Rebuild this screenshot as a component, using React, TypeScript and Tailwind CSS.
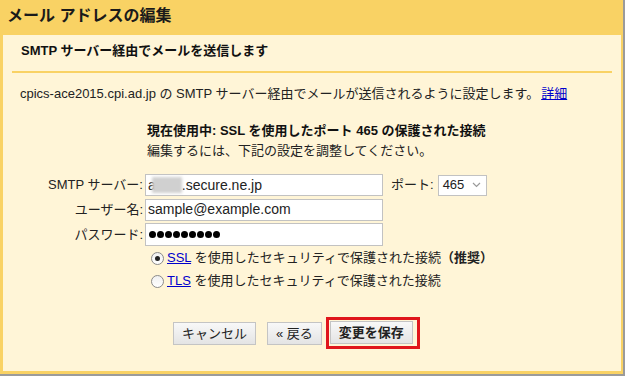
import React from "react"

const font = { fontFamily: '"Liberation Sans", Arial, "Noto Sans CJK JP", sans-serif' }

function Radio({ checked }: { checked?: boolean }) {
  return (
    <span className="w-[13px] h-[13px] rounded-full border border-[#8a8a8a] bg-gradient-to-b from-[#f0f0f0] to-white flex items-center justify-center shrink-0">
      {checked && <span className="w-[5px] h-[5px] rounded-full bg-[#222]" />}
    </span>
  )
}

function Btn({ children, bold }: { children: React.ReactNode; bold?: boolean }) {
  return (
    <button
      className={`h-[23px] px-[8px] border border-[#c4c4c4] bg-gradient-to-b from-[#f8f8f8] to-[#e4e4e4] text-[13px] text-[#222] leading-none ${bold ? "font-bold" : ""}`}
      style={font}
    >
      {children}
    </button>
  )
}

export default function App() {
  return (
    <div className="w-[625px] h-[376px] bg-[#9b9b9b] overflow-hidden" style={font}>
      <div className="w-[623px] h-[374px] bg-[#f9d264] flex flex-col">
        {/* header */}
        <div className="h-[35px] shrink-0 flex items-center pl-[7px] pb-[3px]">
          <h1 className="text-[16px] font-bold text-[#1a1a1a] leading-none">メール アドレスの編集</h1>
        </div>

        {/* panel */}
        <div className="ml-[3px] mr-[2px] h-[336px] bg-[#fff5d7] flex flex-col text-[13px] text-[#222]">
          <div className="mt-[8px] pl-[18px] h-[16px] leading-[16px] font-bold text-[#111]">
            SMTP サーバー経由でメールを送信します
          </div>
          <div className="mt-[12px] ml-[9px] w-[600px] h-[2px] bg-[#f9d264]" />

          <div className="mt-[13px] pl-[17px] h-[16px] leading-[16px]">
            cpics-ace2015.cpi.ad.jp の SMTP サーバー経由でメールが送信されるように設定します。
            <a href="#" className="text-[#0000cc] underline ml-[2px]">詳細</a>
          </div>

          <div className="mt-[21px] pl-[144px] h-[16px] leading-[16px] font-bold text-[#111]">
            現在使用中: SSL を使用したポート 465 の保護された接続
          </div>
          <div className="mt-[4px] pl-[144px] h-[16px] leading-[16px]">
            編集するには、下記の設定を調整してください。
          </div>

          {/* form */}
          <div className="mt-[15px] grid grid-cols-[140px_auto] gap-x-[2px] gap-y-[2.5px] items-center">
            <label className="text-right leading-[16px]">SMTP サーバー:</label>
            <div className="flex items-center">
              <div className="w-[238px] h-[22px] border border-[#c2c2c2] bg-white flex items-center pl-[2px] text-[14px]">
                <span>a</span>
                <span className="relative -ml-[4px] w-[30px] h-[16px] bg-[#d0d0d0] blur-[1.5px] inline-block" />
                <span>.secure.ne.jp</span>
              </div>
              <span className="ml-[8px] leading-[16px]">ポート:</span>
              <div className="ml-[4px] w-[49px] h-[21px] border border-[#c2c2c2] bg-white flex items-center justify-between pl-[4px] pr-[5px] text-[13px]">
                <span>465</span>
                <svg width="9" height="6" viewBox="0 0 9 6">
                  <path d="M1 1l3.5 3.5L8 1" fill="none" stroke="#9a9a9a" strokeWidth="1.2" />
                </svg>
              </div>
            </div>

            <label className="text-right leading-[16px]">ユーザー名:</label>
            <div className="w-[238px] h-[22px] border border-[#c2c2c2] bg-white flex items-center pl-[2px] text-[14px]">
              sample@example.com
            </div>

            <label className="text-right leading-[16px]">パスワード:</label>
            <div className="w-[238px] h-[23px] border border-[#c2c2c2] bg-white flex items-center pl-[3px] gap-[1px]">
              {Array.from({ length: 9 }).map((_, i) => (
                <span key={i} className="w-[7px] h-[7px] rounded-full bg-black" />
              ))}
            </div>
          </div>

          {/* radios */}
          <div className="mt-[4px] pl-[148px] flex flex-col gap-[7px]">
            <div className="flex items-center gap-[3px] h-[16px] leading-[16px]">
              <Radio checked />
              <span>
                <a href="#" className="text-[#0000cc] underline">SSL</a> を使用したセキュリティで保護された接続<b className="font-bold">（推奨）</b>
              </span>
            </div>
            <div className="flex items-center gap-[3px] h-[16px] leading-[16px]">
              <Radio />
              <span>
                <a href="#" className="text-[#0000cc] underline">TLS</a> を使用したセキュリティで保護された接続
              </span>
            </div>
          </div>

          {/* buttons */}
          <div className="mt-[28px] pl-[170px] flex items-start">
            <div className="mt-[5px]">
              <Btn>キャンセル</Btn>
            </div>
            <div className="mt-[5px] ml-[11px]">
              <Btn>« 戻る</Btn>
            </div>
            <div className="ml-[4px] border-[3px] border-[#e0161b] pt-[1px] pl-[1px] pr-[4px] pb-[2px]">
              <Btn bold>変更を保存</Btn>
            </div>
          </div>
        </div>
      </div>
    </div>
  )
}
